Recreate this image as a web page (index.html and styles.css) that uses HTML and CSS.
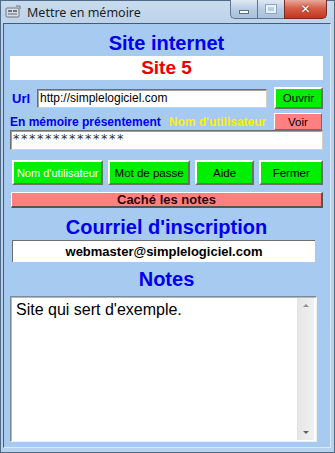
FILE: index.html
```html
<!DOCTYPE html>
<html lang="fr">
<head>
<meta charset="utf-8">
<title>Mettre en mémoire</title>
<link rel="stylesheet" href="styles.css">
</head>
<body>
<div class="window">
  <div class="titlebar">
    <svg class="app-icon" width="16" height="14" viewBox="0 0 16 14">
      <rect x="1" y="3" width="13" height="9" rx="1" fill="#d8dde3" stroke="#6d7782"/>
      <rect x="3" y="5" width="4" height="2" fill="#6d7782"/>
      <rect x="8" y="5" width="4" height="2" fill="#6d7782"/>
      <rect x="3" y="8" width="9" height="2" fill="#9aa3ad"/>
      <path d="M11 1 L15 1 L15 4" fill="none" stroke="#6d7782"/>
    </svg>
    <span class="title">Mettre en mémoire</span>
    <div class="ctrls">
      <span class="ctrl min"><span class="min-bar"></span></span>
      <span class="ctrl max"><span class="max-box"></span></span>
      <span class="ctrl close">✕</span>
    </div>
  </div>
  <div class="client">
    <div class="heading h-site">Site internet</div>
    <div class="site-box">Site 5</div>
    <div class="row url-row">
      <span class="lbl-url">Url</span>
      <div class="field url-field">http://simplelogiciel.com</div>
      <button class="btn green ouvrir">Ouvrir</button>
    </div>
    <div class="row mem-row">
      <span class="lbl-mem">En mémoire présentement</span>
      <span class="lbl-user">Nom d'utilisateur</span>
      <button class="btn pink voir">Voir</button>
    </div>
    <div class="field pass-field">**************</div>
    <div class="row btn-row">
      <button class="btn green b-user">Nom d'utilisateur</button>
      <button class="btn green b-pass">Mot de passe</button>
      <button class="btn green b-aide">Aide</button>
      <button class="btn green b-fermer">Fermer</button>
    </div>
    <button class="btn pink hide-notes">Caché les notes</button>
    <div class="heading h-mail">Courriel d'inscription</div>
    <div class="mail-box">webmaster@simplelogiciel.com</div>
    <div class="heading h-notes">Notes</div>
    <div class="notes">
      <div class="notes-text">Site qui sert d'exemple.</div>
      <div class="scrollbar">
        <span class="arrow up"></span>
        <span class="arrow down"></span>
      </div>
    </div>
  </div>
</div>
</body>
</html>
```
FILE: styles.css
```css
* { box-sizing: border-box; }
html, body { margin: 0; padding: 0; }
body { width: 335px; height: 453px; overflow: hidden; background: #b8d0e8; }

.window {
  width: 335px; height: 453px;
  border: 1px solid #4f6a86;
  background: linear-gradient(#c9dbee 0px, #bcd3ea 22px, #b9d1ea 100%);
  padding: 0 3px 4px 2px;
  display: flex; flex-direction: column;
}

.titlebar {
  height: 22px;
  display: flex; align-items: center;
  padding-left: 2px;
}
.app-icon { margin-right: 6px; }
.title {
  font: 12.5px "Noto Sans", "DejaVu Sans", sans-serif;
  color: #1e1e1e;
  flex: 1;
  margin-top: 1px;
}
.ctrls { display: flex; align-self: flex-start; margin-right: 4px; margin-top: -1px; }
.ctrl {
  height: 19px;
  display: flex; align-items: center; justify-content: center;
  border: 1px solid #5f7590;
  border-top: none;
}
.min { width: 27px; border-radius: 0 0 0 5px; background: linear-gradient(#dfe9f4, #b8cde4 50%, #a9c1dc); border-right: none; }
.max { width: 27px; background: linear-gradient(#dfe9f4, #b8cde4 50%, #a9c1dc); border-right: none; }
.close {
  width: 43px; border-radius: 0 0 5px 0;
  background: linear-gradient(#e9a99c, #d4604a 45%, #c2361f);
  border-color: #7a2b20;
  color: #fff; font: bold 12px "DejaVu Sans", sans-serif;
  text-shadow: 0 0 2px #5a1a10;
}
.min-bar { width: 10px; height: 4px; background: #fff; border: 1px solid #5d6f86; margin-top: 5px; }
.max-box { width: 10px; height: 8px; border: 2px solid #e8f0f8; outline: 1px solid #8fa4be; }

.client {
  flex: 1;
  background: #a6caf0;
  border: 1px solid #4a5a6c;
  border-right-color: #dbe7f3; border-bottom-color: #dbe7f3;
  padding: 0 7px 0 6px;
  display: flex; flex-direction: column;
  font-family: "Liberation Sans", Arial, sans-serif;
}

.heading {
  color: #0000ee;
  font: bold 20px "Liberation Sans", Arial, sans-serif;
  text-align: center;
}
.h-site { height: 32px; line-height: 22px; padding-top: 8px; }
.site-box {
  height: 24px; background: #fff;
  color: #ee0000; font-weight: bold; font-size: 19px;
  text-align: center; line-height: 24px;
}

.row { display: flex; align-items: center; }
.url-row { margin-top: 7px; height: 22px; }
.lbl-url { color: #0000ee; font-weight: bold; font-size: 13px; width: 27px; padding-left: 2px; }
.field {
  background: #fff;
  border: 1px solid #828790;
  border-color: #6e6e6e #d4d0c8 #d4d0c8 #6e6e6e;
  box-shadow: inset 1px 1px 0 #a0a0a0;
  font-size: 12px; color: #000;
}
.url-field { width: 230px; height: 19px; line-height: 17px; padding-left: 2px; }

.btn {
  font-family: "Liberation Sans", Arial, sans-serif;
  font-size: 11.5px; color: #000;
  border: 2px solid; border-color: #fff #6e6e6e #6e6e6e #fff;
  padding: 0; margin: 0;
  white-space: nowrap;
  display: flex; align-items: center; justify-content: center;
}
.green { background: #00ee00; }
.pink { background: #ff8080; }
.ouvrir { width: 49px; height: 22px; margin-left: auto; }

.mem-row { margin-top: 4px; height: 17px; }
.lbl-mem { color: #0000ee; font-weight: bold; font-size: 12px; }
.lbl-user { color: #f4f400; font-weight: bold; font-size: 12px; margin-left: 8px; }
.voir { width: 48px; height: 17px; margin-left: auto; margin-right: 1px; border-width: 1px; border-color: #fff #6e6e6e #6e6e6e #fff; }

.pass-field {
  height: 20px; line-height: 20px; padding-left: 2px;
  font: 13px "DejaVu Sans", sans-serif; color: #333; letter-spacing: 1.5px;
}

.btn-row { margin-top: 10px; height: 25px; padding-left: 2px; gap: 5px; }
.btn-row .btn { height: 25px; }
.b-user { width: 92px; color: #fff; font-size: 11px; }
.b-pass { width: 82px; }
.b-aide { width: 60px; }
.b-fermer { width: 64px; }

.hide-notes {
  margin-top: 7px; margin-left: 1px;
  width: 312px; height: 16px;
  font-weight: bold; font-size: 13px; color: #300;
  border-width: 1px 2px 2px 1px; border-color: #fff #555 #555 #fff;
}

.h-mail { height: 32px; line-height: 22px; padding-top: 8px; font-size: 20px; }
.mail-box {
  margin-left: 2px; width: 303px; height: 22px;
  background: #fff;
  border-top: 1px solid #6e6e6e; border-left: 1px solid #6e6e6e;
  font-weight: bold; font-size: 13px; color: #000;
  text-align: center; line-height: 21px;
}
.h-notes { height: 34px; line-height: 22px; padding-top: 6px; }

.notes {
  width: 307px; height: 146px;
  background: #fff;
  border: 1px solid #7b8a9a;
  border-right-color: #f0f0f0; border-bottom-color: #f0f0f0;
  box-shadow: inset 1px 1px 0 #b0b8c0;
  display: flex;
}
.notes-text { flex: 1; font: 16px "Liberation Sans", Arial, sans-serif; color: #000; padding: 4px 0 0 5px; }
.scrollbar {
  width: 17px; margin: 1px 2px 1px 0;
  background: linear-gradient(90deg, #e6e6e6, #f0f0f0);
  border-left: 1px solid #e2e2e2;
  display: flex; flex-direction: column; justify-content: space-between; align-items: center;
  padding: 6px 0;
}
.arrow { width: 0; height: 0; border-left: 3px solid transparent; border-right: 3px solid transparent; }
.up { border-bottom: 3px solid #909090; }
.down { border-top: 3px solid #606060; }
```
